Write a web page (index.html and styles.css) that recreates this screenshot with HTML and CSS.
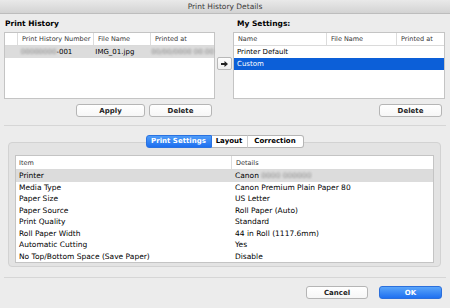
FILE: index.html
```html
<!DOCTYPE html>
<html>
<head>
    <title>Print History Details</title>
    <meta charset="utf-8">
    <link rel="stylesheet" href="styles.css">
</head>
<body>
<div class="window">
    <div class="titlebar">Print History Details</div>

    <div class="top">
        <div class="panel left">
            <div class="label">Print History</div>
            <div class="table">
                <div class="thead">
                    <span class="h-c0"></span>
                    <span class="h-c1">Print History Number</span>
                    <span class="h-c2">File Name</span>
                    <span class="h-c3">Printed at</span>
                </div>
                <div class="row gray">
                    <span class="h-c0"></span>
                    <span class="h-c1"><span class="blur">00000000</span>-001</span>
                    <span class="h-c2">IMG_01.jpg</span>
                    <span class="h-c3"><span class="blur">00/00/0000 00:00</span></span>
                </div>
            </div>
            <div class="btns">
                <button class="btn apply">Apply</button>
                <button class="btn del">Delete</button>
            </div>
        </div>

        <div class="mid">
            <button class="arrow">
                <svg width="7" height="6" viewBox="0 0 7 6"><path d="M0 2h3.5V0L7 3 3.5 6V4H0z" fill="#222"/></svg>
            </button>
        </div>

        <div class="panel right">
            <div class="label">My Settings:</div>
            <div class="table">
                <div class="thead">
                    <span class="s-c1">Name</span>
                    <span class="s-c2">File Name</span>
                    <span class="s-c3">Printed at</span>
                </div>
                <div class="row"><span class="s-c1">Printer Default</span></div>
                <div class="row blue"><span class="s-c1">Custom</span></div>
            </div>
            <div class="btns">
                <button class="btn del">Delete</button>
            </div>
        </div>
    </div>

    <div class="sep"></div>

    <div class="lower">
        <div class="tabs">
            <span class="tab on">Print Settings</span>
            <span class="tab mid-tab">Layout</span>
            <span class="tab last">Correction</span>
        </div>
        <div class="group">
            <div class="table details">
                <div class="thead">
                    <span class="d-c1">Item</span>
                    <span class="d-c2">Details</span>
                </div>
                <div class="row gray"><span class="d-c1">Printer</span><span class="d-c2">Canon <span class="blur">0000 000000</span></span></div>
                <div class="row"><span class="d-c1">Media Type</span><span class="d-c2">Canon Premium Plain Paper 80</span></div>
                <div class="row"><span class="d-c1">Paper Size</span><span class="d-c2">US Letter</span></div>
                <div class="row"><span class="d-c1">Paper Source</span><span class="d-c2">Roll Paper (Auto)</span></div>
                <div class="row"><span class="d-c1">Print Quality</span><span class="d-c2">Standard</span></div>
                <div class="row"><span class="d-c1">Roll Paper Width</span><span class="d-c2">44 in Roll (1117.6mm)</span></div>
                <div class="row"><span class="d-c1">Automatic Cutting</span><span class="d-c2">Yes</span></div>
                <div class="row"><span class="d-c1">No Top/Bottom Space (Save Paper)</span><span class="d-c2">Disable</span></div>
            </div>
        </div>
    </div>

    <div class="sep bottom"></div>

    <div class="footer">
        <button class="btn cancel">Cancel</button>
        <button class="btn ok">OK</button>
    </div>
</div>
</body>
</html>
```

FILE: styles.css
```css
* {
    margin: 0;
    padding: 0;
    box-sizing: border-box;
}

body {
    background: #ececec;
    font-family: "DejaVu Sans", sans-serif;
    font-size: 7px;
    color: #000;
}

.window {
    width: 450px;
    height: 308px;
    background: #ececec;
}

.titlebar {
    height: 14px;
    line-height: 13px;
    text-align: center;
    font-size: 7.5px;
    color: #3a3a3a;
    background: linear-gradient(#e9e9e9, #d3d3d3);
    border-bottom: 1px solid #bdbdbd;
}

.top {
    display: flex;
    padding: 0 5px 0 4px;
}

.panel.left {
    width: 211px;
}

.panel.right {
    width: 212px;
}

.label {
    height: 18px;
    line-height: 20px;
    font-weight: bold;
    font-size: 7.5px;
    padding-left: 1px;
}

.panel.right .label {
    padding-left: 4px;
}

.table {
    background: #fff;
    border: 1px solid #c4c4c4;
    height: 67px;
}

.thead {
    display: flex;
    height: 13px;
    line-height: 13px;
    border-bottom: 1px solid #dadada;
    font-size: 6.5px;
    color: #333;
}

.thead span {
    border-right: 1px solid #dcdcdc;
    padding-left: 4px;
}

.thead span:last-child {
    border-right: none;
}

.row {
    display: flex;
    height: 12px;
    line-height: 12px;
    white-space: nowrap;
}

.row span {
    padding-left: 3px;
}

.row.gray {
    background: #dcdcdc;
}

.row.blue {
    background: #0c5fd8;
    color: #fff;
}

.blur {
    color: #888;
    filter: blur(1.3px);
    padding-left: 0 !important;
}

.h-c0 { width: 13px; }
.h-c1 { width: 76px; }
.h-c2 { width: 57px; }
.h-c3 { flex: 1; }

.s-c1 { width: 93px; }
.s-c2 { width: 70px; }
.s-c3 { flex: 1; }

.btns {
    display: flex;
    justify-content: flex-end;
    gap: 4px;
    padding: 5px 3px 0 0;
}

.btn {
    height: 13px;
    font-family: "DejaVu Sans", sans-serif;
    font-size: 7px;
    font-weight: bold;
    color: #222;
    background: linear-gradient(#fff, #f6f6f6);
    border: 1px solid #b5b5b5;
    border-radius: 3px;
}

.btn.apply { width: 69px; }
.btn.del { width: 63px; }

.mid {
    width: 18px;
    padding: 43px 0 0 2px;
}

.arrow {
    display: flex;
    align-items: center;
    justify-content: center;
    width: 15px;
    height: 13px;
    background: linear-gradient(#fdfdfd, #efefef);
    border: 1px solid #b8b8b8;
    border-radius: 2px;
}

.sep {
    height: 1px;
    background: #d6d6d6;
    margin: 8px 4px 0;
}

.lower {
    padding: 9px 9px 0 8px;
}

.tabs {
    display: flex;
    justify-content: center;
    position: relative;
    z-index: 1;
    margin-bottom: -6px;
}

.tab {
    height: 13px;
    line-height: 11px;
    text-align: center;
    white-space: nowrap;
    font-size: 7px;
    font-weight: bold;
    background: #fff;
    border: 1px solid #b5b5b5;
    border-left: none;
}

.tab.on {
    width: 66px;
    color: #fff;
    background: linear-gradient(#4f9cf8, #1d6ff0);
    border: 1px solid #2a72e0;
    border-radius: 3px 0 0 3px;
}

.tab.mid-tab {
    width: 36px;
    border-right: 1px solid #d0d0d0;
}

.tab.last {
    width: 56px;
    border-radius: 0 3px 3px 0;
}

.group {
    height: 125px;
    background: #e3e3e3;
    border: 1px solid #d2d2d2;
    border-radius: 4px;
    padding: 12px 6px 0;
}

.table.details {
    height: 108px;
}

.details .thead {
    height: 14px;
    line-height: 14px;
}

.details .row {
    height: 11.5px;
    line-height: 11.5px;
    font-size: 7.5px;
}

.d-c1 { width: 216px; }
.d-c2 { flex: 1; }

.details .thead .d-c1 {
    padding-left: 3px;
}

.sep.bottom {
    margin-top: 10px;
}

.footer {
    display: flex;
    justify-content: flex-end;
    gap: 11px;
    padding: 8px 8px 0 0;
}

.btn.cancel { width: 62px; }

.btn.ok {
    width: 63px;
    color: #fff;
    background: linear-gradient(#5aa5fa, #1f70f0);
    border-color: #2b6fdc;
}
```
